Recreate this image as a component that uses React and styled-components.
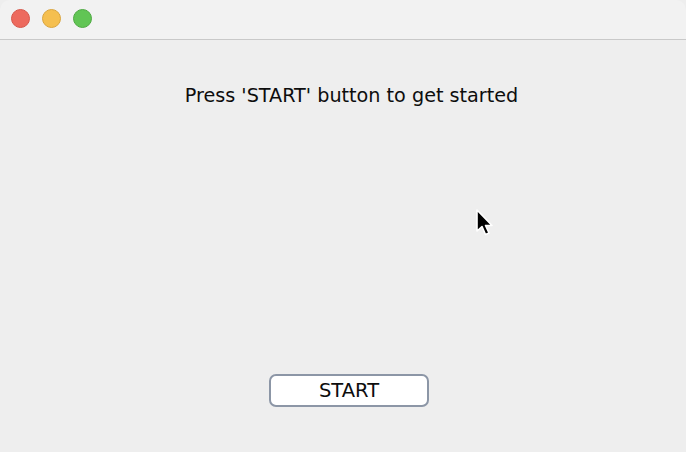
import React from "react";
import styled, { createGlobalStyle } from "styled-components";

const GlobalStyle = createGlobalStyle`
  html, body {
    margin: 0;
    padding: 0;
    background: #eeeeee;
  }
  #root {
    width: 686px;
    height: 452px;
  }
`;

const Window = styled.div`
  width: 686px;
  height: 452px;
  display: flex;
  flex-direction: column;
  background: #eeeeee;
  font-family: "DejaVu Sans", "Liberation Sans", sans-serif;
  color: #111;
  position: relative;
  overflow: hidden;
  border-radius: 10px 10px 0 0;
`;

const TitleBar = styled.div`
  height: 40px;
  flex: none;
  display: flex;
  align-items: center;
  gap: 12px;
  padding-left: 11px;
  background: #f2f2f2;
  border-bottom: 1px solid #c9c9c9;
  box-sizing: border-box;
  padding-bottom: 2px;
`;

const Light = styled.span`
  width: 19px;
  height: 19px;
  border-radius: 50%;
  background: ${(p) => p.$color};
  border: 0.5px solid ${(p) => p.$edge};
  box-sizing: border-box;
`;

const Content = styled.div`
  flex: 1;
  display: flex;
  flex-direction: column;
  align-items: center;
  padding-top: 43px;
  padding-bottom: 45px;
`;

const Prompt = styled.div`
  font-size: 19.2px;
  line-height: 26px;
  margin-left: 17px;
  color: #0d0d0d;
`;

const Spacer = styled.div`
  flex: 1;
`;

const StartButton = styled.button`
  width: 160px;
  height: 33px;
  margin-left: 12px;
  background: #ffffff;
  border: 2px solid #8c96a6;
  border-radius: 7px;
  font-family: "DejaVu Sans", "Liberation Sans", sans-serif;
  font-size: 19.5px;
  color: #0d0d0d;
  padding: 0;
  cursor: pointer;
`;

const Cursor = styled.svg`
  position: absolute;
  left: 474px;
  top: 207px;
`;

export default function App() {
  return (
    <>
      <GlobalStyle />
      <Window>
        <TitleBar>
          <Light $color="#ed6a5e" $edge="#d6574b" />
          <Light $color="#f5bf4f" $edge="#d9a43d" />
          <Light $color="#61c554" $edge="#4ea942" />
        </TitleBar>
        <Content>
          <Prompt>Press 'START' button to get started</Prompt>
          <Spacer />
          <StartButton>START</StartButton>
        </Content>
        <Cursor width="22" height="32" viewBox="0 0 22 32">
          <path
            d="M3 3 L3 24 L8 19.5 L11.5 27.5 L15 26 L11.5 18.5 L18 18.5 Z"
            fill="#000"
            stroke="#fff"
            strokeWidth="1.6"
            strokeLinejoin="round"
          />
        </Cursor>
      </Window>
    </>
  );
}
